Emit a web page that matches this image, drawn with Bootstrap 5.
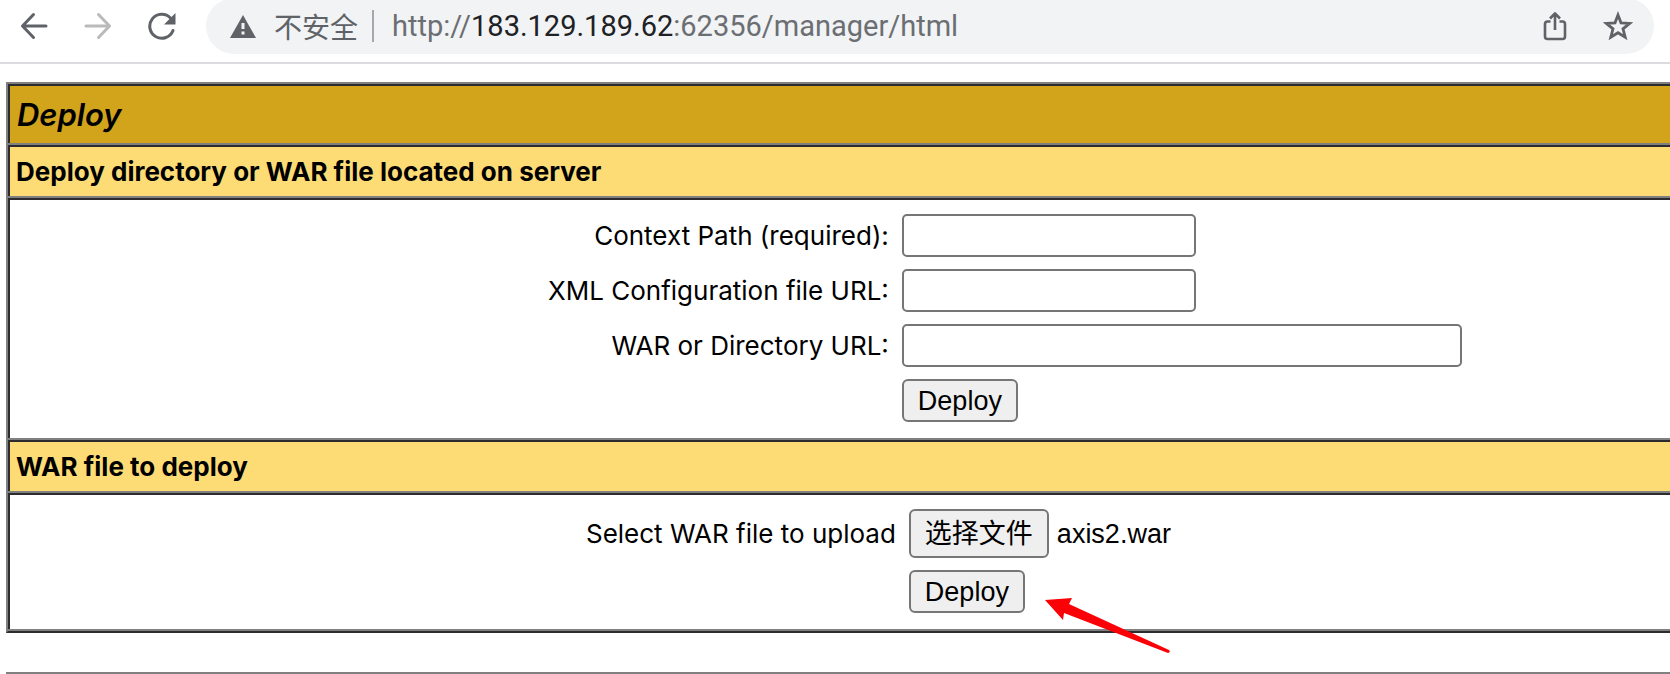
<!DOCTYPE html>
<html lang="zh-CN">
<head>
<meta charset="utf-8">
<meta name="viewport" content="width=device-width, initial-scale=1">
<title>/manager</title>
<link rel="stylesheet" href="https://cdn.jsdelivr.net/npm/bootstrap@5.3.0/dist/css/bootstrap.min.css">
<style>
  :root { --edge: #808080; --edge-dark: #2c2b30; --chrome: #5f6368; }
  body { font-family: Inter, "Noto Sans CJK SC", sans-serif; font-size: 26px; line-height: 32px; color: #000; background: #fff; overflow-x: hidden; }

  /* browser toolbar */
  .toolbar { height: 64px; border-bottom: 2px solid #dadcdf; padding: 0 16px; gap: 27px; overflow: hidden; color: var(--chrome); }
  .history { gap: 29px; }
  .tool { display: flex; align-items: center; justify-content: center; width: 35px; height: 52px; padding: 0; border: 0; background: none; color: inherit; }
  .tool:disabled { color: #bababa; }
  .address { height: 56px; margin-top: -2px; border-radius: 28px; background: #f1f3f4; padding: 0 19px 0 24px; }
  .address-actions { gap: 28px; }
  .security { font-family: "Noto Sans CJK SC", sans-serif; font-size: 28px; gap: 18px; }
  .divider { width: 2px; height: 32px; margin: 0 18px 0 14px; background: #a6a8ab; }
  .url { font-family: Roboto, sans-serif; font-size: 29px; color: #6b6e72; text-decoration: none; }
  .url b { font-weight: 400; color: #202124; }

  /* manager panels */
  .panel { margin: 18px 0 0 6px; border-left: 2px solid var(--edge); border-bottom: 2px solid var(--edge-dark); }
  .band { border-top: 2px solid var(--edge); box-shadow: inset 2px 2px 0 var(--edge-dark); padding: 16px 0; margin: 0; }
  .panel-title { background: #d2a41c; font-size: 31px; font-style: italic; font-weight: 600; line-height: 37px; padding: 12px 10px 10px 9px; }
  .section-title { background: #fddc75; font-size: 26px; font-weight: 700; line-height: 32px; padding: 11px 8px 8px 8px; }
  .fields { display: grid; grid-template-columns: 53% 1fr; gap: 12px 13px; align-items: center; }
  .fields-upload { grid-template-columns: calc(53% + 7px) 1fr; border-bottom: 2px solid var(--edge); }
  .fields > label { text-align: right; }
  .start-2 { grid-column: 2; justify-self: start; }
  .field { height: 43px; width: 294px; max-width: 100%; padding: 2px 6px; border: 2px solid #767676; border-radius: 5px; background: #fff; }
  .field-wide { width: 560px; }
  .push { display: inline-flex; align-items: center; height: 43px; padding: 0 14px; border: 2px solid #767676; border-radius: 6px; background: #efefef; color: #000; font: 27px/32px "Liberation Sans", "Noto Sans CJK SC", sans-serif; cursor: pointer; }
  .push-file { height: 49px; }
  .file-name { font: 27px/32px "Liberation Sans", sans-serif; }
  .pointer { position: absolute; left: calc(100% + 20px); top: 28px; pointer-events: none; }
  .rule { margin: 39px 0 0 6px; border: 0; border-top: 2px solid var(--edge); opacity: 1; }
</style>
</head>
<body>
<header class="toolbar d-flex">
  <nav class="history d-flex flex-shrink-0">
    <button class="tool" type="button" aria-label="Back">
      <svg width="28" height="28" viewBox="0 0 28 28" fill="none" stroke="currentColor" stroke-width="3" stroke-linecap="round" stroke-linejoin="round"><path d="M26 14H2.500M13.500 2.500 2.500 14l11 11.500"/></svg>
    </button>
    <button class="tool" type="button" aria-label="Forward" disabled>
      <svg width="28" height="28" viewBox="0 0 28 28" fill="none" stroke="currentColor" stroke-width="3" stroke-linecap="round" stroke-linejoin="round"><path d="M2 14h23.500M14.500 2.500l11 11.500-11 11.500"/></svg>
    </button>
    <button class="tool" type="button" aria-label="Reload">
      <svg width="28" height="28" viewBox="0 0 28 28" fill="none"><path d="M25 18.500A12 12 0 1 1 22.500 6" stroke="currentColor" stroke-width="3" stroke-linecap="round"/><path d="M27.500 1v11.500H16z" fill="currentColor"/></svg>
    </button>
  </nav>
  <div class="address d-flex align-items-center flex-grow-1">
    <div class="security d-flex align-items-center flex-shrink-0">
      <svg width="26" height="23" viewBox="0 0 26 23"><path d="M13 0 26 23H0z" fill="currentColor"/><path d="M11.500 8h3v6h-3zM11.500 16.500h3v3h-3z" fill="#f1f3f4"/></svg>
      <span>不安全</span>
    </div>
    <span class="divider flex-shrink-0"></span>
    <a class="url text-truncate" href="#">http://<b>183.129.189.62</b>:62356/manager/html</a>
    <div class="address-actions d-flex ms-auto flex-shrink-0">
      <button class="tool" type="button" aria-label="Share">
        <svg width="24" height="30" viewBox="0 0 24 30" fill="none" stroke="currentColor" stroke-width="2.600" stroke-linejoin="round"><path d="M7.500 10.500H4.500a2.500 2.500 0 0 0-2.500 2.500v12.500A2.500 2.500 0 0 0 4.500 28h15a2.500 2.500 0 0 0 2.500-2.500V13a2.500 2.500 0 0 0-2.500-2.500h-3M12 19V2.500M7 7.500l5-5 5 5"/></svg>
      </button>
      <button class="tool" type="button" aria-label="Bookmark">
        <svg width="30" height="30" viewBox="0 0 30 30" fill="none" stroke="currentColor" stroke-width="2.800"><path d="m15 4 3 7.800 8.600.6-6.600 5.400 2.200 8.400L15 21.700l-7.200 4.500L10 17.800l-6.600-5.400 8.600-.6z"/></svg>
      </button>
    </div>
  </div>
</header>

<main>
  <div class="panel">
    <h1 class="band panel-title">Deploy</h1>

    <h2 class="band section-title">Deploy directory or WAR file located on server</h2>
    <form class="band fields">
      <label for="path">Context Path (required):</label>
      <input class="field" id="path" type="text">
      <label for="config">XML Configuration file URL:</label>
      <input class="field" id="config" type="text">
      <label for="war-url">WAR or Directory URL:</label>
      <input class="field field-wide" id="war-url" type="text">
      <button class="push start-2" type="button">Deploy</button>
    </form>

    <h2 class="band section-title">WAR file to deploy</h2>
    <form class="band fields fields-upload">
      <label for="war-file">Select WAR file to upload</label>
      <div class="d-flex align-items-center gap-2 position-relative">
        <input class="visually-hidden" id="war-file" type="file">
        <label class="push push-file" for="war-file">选择文件</label>
        <span class="file-name">axis2.war</span>
      </div>
      <div class="start-2 d-flex position-relative">
        <button class="push" type="button">Deploy</button>
        <svg class="pointer" width="126" height="56" viewBox="0 0 126 56" aria-hidden="true"><path d="M0 2 27 0 24 6 124 52Q126 54 123 55L19 15 18 22z" fill="#fb0007"/></svg>
      </div>
    </form>
  </div>
  <hr class="rule">
</main>
<script src="https://cdn.jsdelivr.net/npm/bootstrap@5.3.0/dist/js/bootstrap.bundle.min.js"></script>
</body>
</html>
